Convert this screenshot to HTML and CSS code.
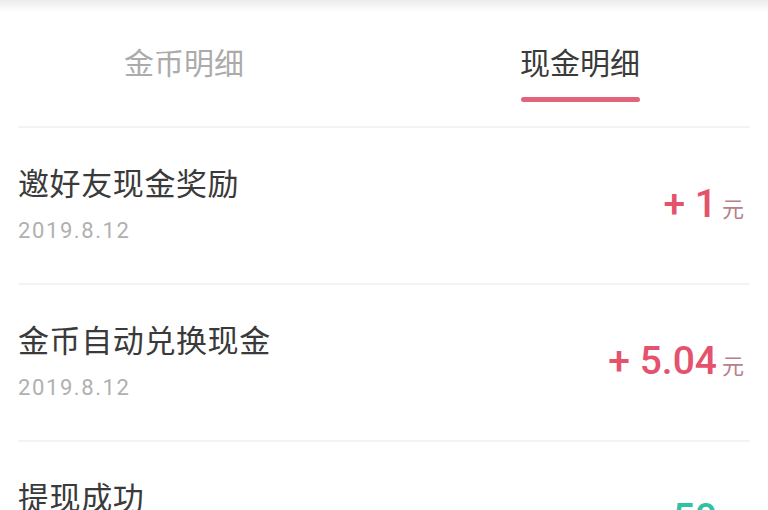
FILE: index.html
```html
<!DOCTYPE html>
<html lang="zh-CN">
<head>
<meta charset="utf-8">
<title>现金明细</title>
<link rel="stylesheet" href="styles.css">
</head>
<body>
<div class="page">
  <nav class="tabs">
    <div class="tab">金币明细</div>
    <div class="tab active">现金明细<span class="bar"></span></div>
  </nav>
  <ul class="list">
    <li class="row">
      <div class="info">
        <div class="title">邀好友现金奖励</div>
        <div class="date">2019.8.12</div>
      </div>
      <div class="amount plus"><span class="num">+ 1</span><span class="unit">元</span></div>
    </li>
    <li class="row">
      <div class="info">
        <div class="title">金币自动兑换现金</div>
        <div class="date">2019.8.12</div>
      </div>
      <div class="amount plus"><span class="num">+ 5.04</span><span class="unit">元</span></div>
    </li>
    <li class="row">
      <div class="info">
        <div class="title">提现成功</div>
        <div class="date">2019.8.12</div>
      </div>
      <div class="amount minus"><span class="num">- 50</span><span class="unit">元</span></div>
    </li>
  </ul>
</div>
</body>
</html>
```

FILE: styles.css
```css
html, body {
  margin: 0;
  padding: 0;
  background: #fff;
}
body {
  background: linear-gradient(#ebebeb, #ffffff 12px) no-repeat;
  font-family: "Noto Sans CJK SC", "Noto Sans", sans-serif;
  overflow: hidden;
}
.page {
  width: 768px;
  height: 510px;
  overflow: hidden;
}
.tabs {
  display: flex;
  justify-content: space-between;
  align-items: flex-start;
  margin: 0 18px;
  padding: 46px 110px 0 106px;
  border-bottom: 2px solid #f3f3f3;
}
.tab {
  display: flex;
  flex-direction: column;
  align-items: center;
  font-size: 30px;
  line-height: 30px;
  color: #ababab;
  padding-bottom: 50px;
}
.tab.active {
  color: #3a3a3a;
  padding-bottom: 24px;
}
.bar {
  display: block;
  width: 119px;
  height: 5px;
  margin-top: 21px;
  border-radius: 3px;
  background: #e2647b;
}
.list {
  list-style: none;
  margin: 0 18px;
  padding: 0;
}
.row {
  display: flex;
  justify-content: space-between;
  align-items: center;
  padding: 38px 6px 41px 0;
  border-bottom: 2px solid #f3f3f3;
}
.title {
  font-size: 31px;
  line-height: 31px;
  letter-spacing: 0.6px;
  color: #3a3a3a;
}
.date {
  margin-top: 23px;
  font-family: Roboto, "Liberation Sans", sans-serif;
  font-size: 22px;
  line-height: 22px;
  letter-spacing: 1.6px;
  color: #b0b0b0;
}
.amount {
  display: flex;
  align-items: baseline;
  white-space: pre;
}
.num {
  font-family: Roboto, "Liberation Sans", sans-serif;
  font-weight: 500;
  font-size: 39px;
  line-height: 40px;
}
.unit {
  margin-left: 5px;
  font-size: 22px;
  color: #b8808b;
}
.plus .num {
  color: #e5526b;
}
.minus .num {
  color: #2fc49f;
}
```
